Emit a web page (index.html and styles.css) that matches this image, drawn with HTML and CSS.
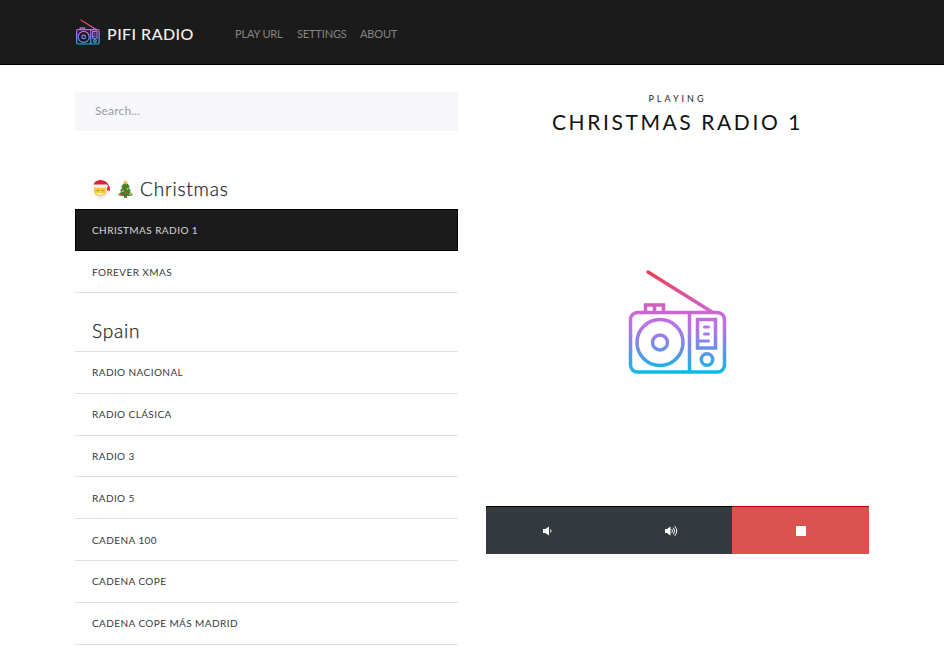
FILE: index.html
```html
<!DOCTYPE html>
<html lang="en">
<head>
<meta charset="utf-8">
<title>PiFi Radio</title>
<link rel="stylesheet" href="styles.css">
</head>
<body>
<svg class="defs" aria-hidden="true">
  <defs>
    <linearGradient id="tint" gradientUnits="userSpaceOnUse" x1="0" y1="0" x2="0" y2="106">
      <stop offset="0" stop-color="#f2384a"/>
      <stop offset=".4" stop-color="#cc66d2"/>
      <stop offset=".53" stop-color="#bd70ea"/>
      <stop offset=".78" stop-color="#6094e8"/>
      <stop offset="1" stop-color="#00bfe5"/>
    </linearGradient>
    <symbol id="radio" viewBox="0 0 100 106">
      <g fill="none" stroke="url(#tint)" stroke-linejoin="round">
        <path d="M20 3 84 43" stroke-linecap="round"/>
        <path d="M17.500 43v-7h18v7M26.500 36v7" stroke-linejoin="miter"/>
        <rect x="2.500" y="43.500" width="94" height="59.500" rx="7"/>
        <path d="M61.500 44v59"/>
        <circle cx="32" cy="73.500" r="23"/>
        <circle cx="32" cy="73.500" r="7.500"/>
        <path d="M69.500 50.500h18v28.500h-18z" stroke-linejoin="miter"/>
        <path d="M76.500 58h4M76.500 65h4M71 72h9.500" stroke-width="3" stroke-linecap="round"/>
        <circle cx="79" cy="90.500" r="5.700"/>
      </g>
    </symbol>
  </defs>
</svg>
<header class="navbar">
  <a class="brand"><svg class="brand-icon"><use href="#radio"/></svg><span>PIFI RADIO</span></a>
  <nav class="links"><a class="play">PLAY URL</a><a class="settings">SETTINGS</a><a class="about">ABOUT</a></nav>
</header>
<main class="content">
  <section class="stations">
    <input class="search" type="text" placeholder="Search...">
    <h2 class="group first">
      <svg class="santa" viewBox="0 0 18 18">
        <path d="M2 7h14v5q-1 6-7 6t-7-6z" fill="#e9eaec"/>
        <path d="M2 7h12v5q-1 4-6 4t-6-4z" fill="#fdc93c"/>
        <path d="M1 6Q2 0 9 0q9 1 9 11h-3V6z" fill="#dc2238"/>
        <rect x="0" y="4.500" width="16" height="3" rx="1.500" fill="#f5f5f6"/>
        <circle cx="16.200" cy="12" r="1.700" fill="#f3f1f1"/>
        <path d="M5 10.500h1.500M10 10.500h1.500" stroke="#b66a2c"/>
        <path d="M4 13.500q2-1 4-.5 2-.5 4 .5l-2 1.300H6z" fill="#f1eee7"/>
      </svg>
      <svg class="tree" viewBox="0 0 15 18">
        <path d="M6 14h3v4H6z" fill="#8c6037"/>
        <path d="M7.500 1 12 7l-1.500.5L13 11l-1.500.5L15 15q-7.500 2.500-15 0l3.500-3.500L2 11l2.500-3.500L3 7z" fill="#3d832f"/>
        <path d="m7.500 0 .8 1.500 1.700.2-1.200 1.200.3 1.600-1.600-.8-1.600.8.300-1.600L5 1.700l1.700-.2z" fill="#f8bd2d"/>
        <circle cx="6" cy="7" r="1" fill="#e03b39"/><circle cx="9.500" cy="9" r="1" fill="#f0b72f"/>
        <circle cx="5" cy="11" r="1" fill="#f0b72f"/><circle cx="8.500" cy="12.500" r="1.100" fill="#e03b39"/>
        <circle cx="3" cy="14" r="1" fill="#e03b39"/><circle cx="12" cy="14" r="1" fill="#e9b63a"/>
      </svg>
      <span>Christmas</span>
    </h2>
    <ul class="list">
      <li class="active"><span>CHRISTMAS RADIO 1</span></li>
      <li><span>FOREVER XMAS</span></li>
    </ul>
    <h2 class="group second"><span>Spain</span></h2>
    <ul class="list ruled">
      <li><span>RADIO NACIONAL</span></li>
      <li><span>RADIO CLÁSICA</span></li>
      <li><span>RADIO 3</span></li>
      <li><span>RADIO 5</span></li>
      <li><span>CADENA 100</span></li>
      <li><span>CADENA COPE</span></li>
      <li><span>CADENA COPE MÁS MADRID</span></li>
    </ul>
  </section>
  <section class="player">
    <p class="status">PLAYING</p>
    <h1 class="title">CHRISTMAS RADIO 1</h1>
    <svg class="art"><use href="#radio"/></svg>
    <div class="controls">
      <button class="quiet" aria-label="Volume down"><svg width="14" height="12" viewBox="0 0 14 12"><path d="M2 4h2.500L8 1.500v9L4.500 8H2z" fill="#fff"/><path d="M9.500 4.500q1.300 1.500 0 3" stroke="#fff" fill="none"/></svg></button>
      <button class="loud" aria-label="Volume up"><svg width="14" height="12" viewBox="0 0 14 12"><path d="M1 4h2L6.500 1.500v9L3 8H1z" fill="#fff"/><path d="M7.800 4.300q1.400 1.700 0 3.400M9.300 2.700q2.700 3.300 0 6.600M10.800 1.200q3.900 4.800 0 9.600" stroke="#fff" fill="none"/></svg></button>
      <button class="stop" aria-label="Stop"><svg width="10" height="10"><rect width="10" height="10" rx=".5" fill="#fff"/></svg></button>
    </div>
  </section>
</main>
</body>
</html>
```
FILE: styles.css
```css
* { box-sizing: border-box; }
body { margin: 0; height: 650px; overflow: hidden; background: #fff; color: #212529; font-family: Lato, "Open Sans", sans-serif; }
.defs { position: absolute; width: 0; height: 0; }
.navbar { display: flex; align-items: center; height: 65px; padding: 3px 75px 0; background: #1b1b1b; border-bottom: 1px solid #000; }
.brand { display: flex; align-items: center; width: 160px; color: #f2f2f2; font-size: 16px; font-weight: 500; letter-spacing: .45px; white-space: nowrap; }
.brand-icon { width: 24px; height: 26px; margin: -3px 7px 0 1px; stroke-width: 5px; }
.links { display: flex; color: #858585; font-size: 11px; letter-spacing: -.15px; }
.links a { white-space: nowrap; }
.play { width: 62px; }
.settings { width: 63px; }
.content { display: grid; grid-template-columns: 383px 383px; column-gap: 28px; padding: 27px 75px 0; }
.search { display: block; width: 100%; height: 39px; padding: 0 20px 2px; border: 0; background: #f7f7f9; font: 12px Lato, sans-serif; letter-spacing: .15px; }
.search::placeholder { color: #929ba3; opacity: 1; }
.group { display: flex; align-items: center; margin: 0; padding-left: 17px; font-size: 19px; font-weight: 300; letter-spacing: .8px; -webkit-text-stroke: .25px #212529; }
.first { height: 78px; padding-top: 37px; }
.second { height: 58px; padding-top: 18px; }
.santa { width: 18px; height: 18px; margin-right: 8px; }
.tree { width: 15px; height: 18px; margin-right: 7px; }
.list { margin: 0; padding: 0; list-style: none; }
.list li { display: flex; align-items: center; height: 41.85px; padding: 1px 0 0 17px; border-bottom: 1px solid #dfe0e1; color: #343a40; font-size: 10px; letter-spacing: .42px; }
.list .active { height: 42px; border: 1px solid #000; padding: 0 0 0 16px; background: #1b1b1b; color: #c9cbce; font-weight: 500; }
.ruled { border-top: 1px solid #dfe0e1; }
.ruled li { padding-top: 0; }
.player { display: flex; flex-direction: column; align-items: center; }
.status { margin: 0; height: 14px; line-height: 13px; font-size: 9px; letter-spacing: 3px; }
.title { margin: 4px 0 0; height: 24px; line-height: 24px; color: #111; font-size: 21px; font-weight: 400; letter-spacing: 2.6px; white-space: nowrap; }
.art { width: 100px; height: 106px; margin: 135px 0 0 1px; stroke-width: 3.5px; }
.controls { display: grid; grid-template-columns: 123px 123px 137px; width: 383px; height: 48px; margin-top: 131px; }
.controls button { display: flex; align-items: center; justify-content: center; padding: 0; border: 0; border-top: 1px solid #000; background: #343a40; }
.controls .stop { background: #d9534f; border-top-color: #b80000; }
```
